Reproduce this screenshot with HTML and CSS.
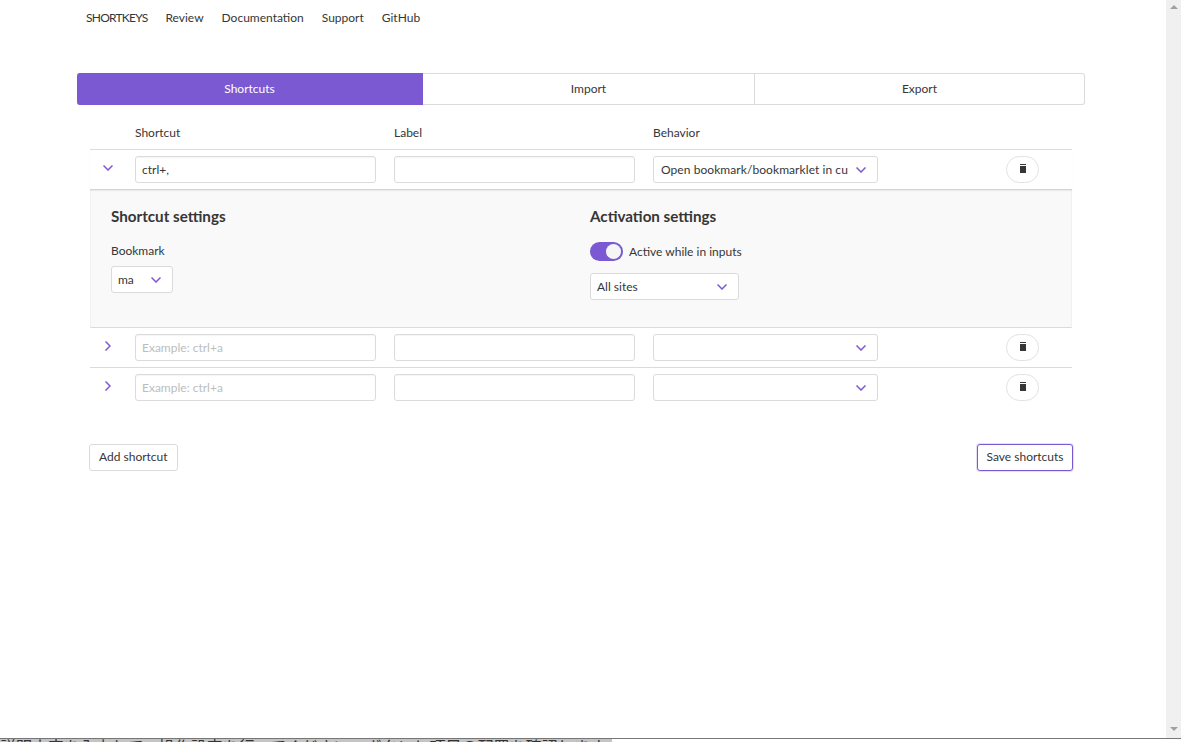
FILE: index.html
```html
<!DOCTYPE html>
<html lang="en">
<head>
<meta charset="utf-8">
<title>Shortkeys</title>
<link rel="stylesheet" href="styles.css">
</head>
<body>
<div class="window">
  <main class="page">
    <nav class="nav">
      <a class="brand">SHORTKEYS</a><a>Review</a><a>Documentation</a><a>Support</a><a>GitHub</a>
    </nav>
    <div class="tabs">
      <div class="tab tab-active">Shortcuts</div>
      <div class="tab tab-import">Import</div>
      <div class="tab tab-export">Export</div>
    </div>
    <section class="table">
      <div class="grid head">
        <span></span><span>Shortcut</span><span>Label</span><span>Behavior</span><span></span>
      </div>
      <div class="grid row first">
        <svg class="caret" width="10" height="6" viewBox="0 0 10 6"><path d="M.5.5 5 5 9.5.5" /></svg>
        <div class="input">ctrl+,</div>
        <div class="input"></div>
        <div class="select wide"><span class="clip">Open bookmark/bookmarklet in cu</span><svg class="chev" width="10" height="6" viewBox="0 0 10 6"><path d="M.5.5 5 5 9.5.5" /></svg></div>
        <div class="act"><button class="del"><svg width="6" height="9" viewBox="0 0 6 9"><path d="M0 0h6v1H0zM0 2h6v7H0z"/></svg></button></div>
      </div>
      <div class="panel">
        <div class="panel-col">
          <h3>Shortcut settings</h3>
          <div class="field-label">Bookmark</div>
          <div class="select small">ma<svg class="chev" width="10" height="6" viewBox="0 0 10 6"><path d="M.5.5 5 5 9.5.5" /></svg></div>
        </div>
        <div class="panel-col">
          <h3>Activation settings</h3>
          <div class="toggle-line"><span class="toggle"><span class="knob"></span></span>Active while in inputs</div>
          <div class="select sites">All sites<svg class="chev" width="10" height="6" viewBox="0 0 10 6"><path d="M.5.5 5 5 9.5.5" /></svg></div>
        </div>
      </div>
      <div class="grid row">
        <svg class="caret side" width="6" height="10" viewBox="0 0 6 10"><path d="M.5.5 5 5 .5 9.5" /></svg>
        <div class="input ph">Example: ctrl+a</div>
        <div class="input"></div>
        <div class="select wide"><span class="clip"></span><svg class="chev" width="10" height="6" viewBox="0 0 10 6"><path d="M.5.5 5 5 9.5.5" /></svg></div>
        <div class="act"><button class="del"><svg width="6" height="9" viewBox="0 0 6 9"><path d="M0 0h6v1H0zM0 2h6v7H0z"/></svg></button></div>
      </div>
      <div class="grid row last">
        <svg class="caret side" width="6" height="10" viewBox="0 0 6 10"><path d="M.5.5 5 5 .5 9.5" /></svg>
        <div class="input ph">Example: ctrl+a</div>
        <div class="input"></div>
        <div class="select wide"><span class="clip"></span><svg class="chev" width="10" height="6" viewBox="0 0 10 6"><path d="M.5.5 5 5 9.5.5" /></svg></div>
        <div class="act"><button class="del"><svg width="6" height="9" viewBox="0 0 6 9"><path d="M0 0h6v1H0zM0 2h6v7H0z"/></svg></button></div>
      </div>
    </section>
    <div class="actions">
      <button class="btn">Add shortcut</button>
      <button class="btn btn-focus">Save shortcuts</button>
    </div>
  </main>
  <aside class="scrollbar">
    <span class="arrow up"></span>
    <span class="arrow down"></span>
  </aside>
</div>
<div class="taskbar"><span class="taskbar-text">説明文字を入力して、操作設定を行ってください。ボタンと項目の配置を確認します</span></div>
</body>
</html>
```
FILE: styles.css
```css
* { box-sizing: border-box; }
html, body { margin: 0; height: 100%; overflow: hidden; background: #fff; }
body { font-family: "Lato", "Noto Sans", sans-serif; font-size: 12px; color: #363636; }
.window { display: flex; height: 738px; }
.page { width: 1166px; flex: none; }
.scrollbar { width: 15px; flex: none; background: #f0f0f0; display: flex; flex-direction: column; justify-content: space-between; align-items: center; padding: 5px 0 7px; }
.arrow { width: 0; height: 0; border-left: 4px solid transparent; border-right: 4px solid transparent; }
.up { border-bottom: 4px solid #a0a0a0; }
.down { border-top: 4px solid #a0a0a0; }

.nav { display: flex; gap: 18px; padding: 11px 0 0 86px; height: 73px; line-height: 14px; }
.brand { letter-spacing: -.75px; }
.tabs { display: flex; margin-left: 77px; width: 1008px; height: 32px; }
.tab { display: flex; align-items: center; justify-content: center; padding-bottom: 2px; border: 1px solid #dbdbdb; border-left: 0; }
.tab-active { width: 346px; background: #7b59d3; border-color: #7b59d3; color: #fff; border-radius: 3px 0 0 3px; }
.tab-import { width: 332px; }
.tab-export { width: 330px; border-radius: 0 3px 3px 0; }

.table { margin: 0 0 0 90px; width: 982px; }
.grid { display: grid; grid-template-columns: 27px 241px 241px 225px 176px; column-gap: 18px; align-items: center; }
.head { height: 45px; padding-top: 11px; border-bottom: 1px solid #dbdbdb; }
.row { height: 40px; border-bottom: 1px solid #dbdbdb; }
.row.first { border-bottom-color: #d4d4d4; box-shadow: 0 1px 1px rgba(0,0,0,.06); position: relative; }
.row.last { height: 39px; border-bottom: 0; }
.caret { justify-self: center; margin: -3px 0 0 9px; }
.caret path, .chev path { fill: none; stroke: #7b59d3; stroke-width: 1.5; }
.input { height: 27px; border: 1px solid #dbdbdb; border-radius: 3px; padding: 0 6px; line-height: 26px; background: #fff; box-shadow: inset 0 1px 1px rgba(10,10,10,.04); }
.ph { color: #bdbdbd; }
.select { height: 27px; border: 1px solid #dbdbdb; border-radius: 3px; background: #fff; display: flex; align-items: center; justify-content: space-between; padding: 0 11px 0 7px; }
.clip { white-space: nowrap; overflow: hidden; width: 188px; letter-spacing: .07px; }
.small { width: 62px; padding-left: 6px; }
.sites { width: 149px; padding-left: 6px; margin-top: 12px; }
.act { padding-left: 110px; }
.del { display: flex; align-items: center; justify-content: center; width: 33px; height: 27px; padding: 0 0 3px; border: 1px solid #e2e2e2; border-radius: 14px; background: #fff; }
.del svg { fill: #363636; }

.panel { height: 138px; display: flex; background: #f9f9f9; border-bottom: 1px solid #dbdbdb; border-right: 1px solid #f1f1f1; border-left: 1px solid #f1f1f1; padding: 17px 0 0 20px; }
.panel-col { width: 479px; }
h3 { margin: 0; font-size: 15.2px; line-height: 18px; font-weight: 700; color: #363636; }
.field-label { margin: 19px 0 8px; line-height: 14px; }
.toggle-line { display: flex; align-items: center; gap: 6px; margin-top: 17px; height: 19px; }
.toggle { display: flex; justify-content: flex-end; align-items: center; width: 33px; height: 19px; padding-right: 2px; background: #7b59d3; border-radius: 10px; }
.knob { width: 15px; height: 15px; background: #f5f5f5; border-radius: 50%; }

.actions { display: flex; justify-content: space-between; width: 984px; margin: 37px 0 0 89px; }
.btn { height: 27px; padding: 0 9px 2px; border: 1px solid #dbdbdb; border-radius: 3px; background: #fff; font: inherit; color: #363636; }
.btn-focus { padding: 0 8.5px 2px; border-color: #7b59d3; box-shadow: 0 0 0 1px rgba(123,89,211,.2); }

.taskbar { position: absolute; left: 0; right: 0; top: 738px; height: 4px; border-top: 1px solid #777; background: #fff; overflow: hidden; }
.taskbar-text { display: block; width: 612px; height: 3px; background: #c4c4c4; overflow: hidden; font-family: "Noto Sans CJK JP", sans-serif; font-size: 16px; line-height: 15px; white-space: nowrap; color: #333; }
```
